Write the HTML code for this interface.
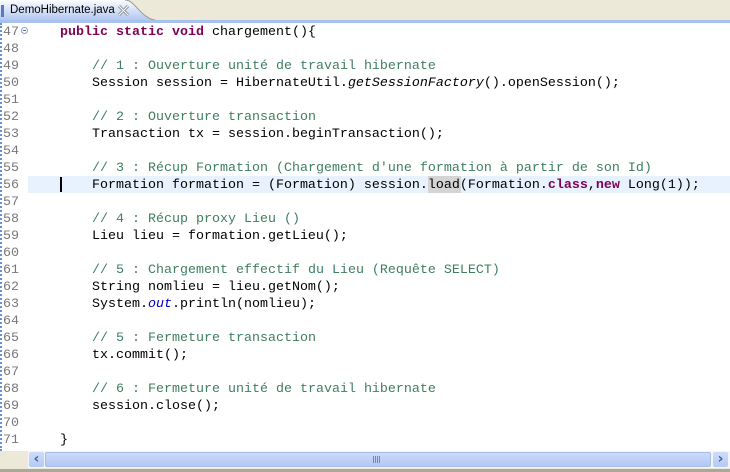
<html><head><style>
body{margin:0;width:730px;height:472px;overflow:hidden;background:#fff;position:relative;font-family:"Liberation Mono",monospace;font-size:13.33px}
.top{position:absolute;left:0;top:0;width:730px;height:23px;background:#ece9d8}
.tab{position:absolute;left:0;top:0;width:160px;height:23px}
.bar{position:absolute;left:0;top:20px;width:730px;height:3px;background:#a7c0ee}
.gut{position:absolute;left:0;top:23px;width:28px;height:428px;background:#fff;border-left:2px dotted #6b8fd3;box-sizing:border-box}
.ln{position:absolute;left:3px;color:#787878;font-size:13.33px;height:17px;line-height:17px}
.c{position:absolute;left:28px;white-space:pre;height:17px;line-height:17px;color:#000;width:702px}
.k{color:#7f0055;font-weight:bold}.cm{color:#3f7f5f}.i{font-style:italic}.f{color:#0000c0;font-style:italic}
</style></head><body>
<div class="top"></div>
<svg class="tab" width="160" height="23"><defs><linearGradient id="g" x1="0" y1="0" x2="0" y2="1"><stop offset="0" stop-color="#fbfcfe"/><stop offset="1" stop-color="#a7c0ee"/></linearGradient></defs><path d="M0 0H125C136 0 140 20 160 21V23H0Z" fill="url(#g)"/><path d="M125 0C136 0 140 20 160 21" stroke="#9c9a8d" fill="none"/></svg>
<div class="bar"></div>
<div style="position:absolute;left:1px;top:5px;width:3px;height:12px;background:#5a7bc0"></div>
<div style="position:absolute;left:10px;top:4px;font-family:'Liberation Sans',sans-serif;font-size:11.5px;color:#000">DemoHibernate.java</div>
<svg style="position:absolute;left:117px;top:4px" width="13" height="13"><path d="M2 2L11 11M11 2L2 11" stroke="#8a8f99" stroke-width="3"/><path d="M2 2L11 11M11 2L2 11" stroke="#fff" stroke-width="1"/></svg>
<div class="gut"></div>
<div style="position:absolute;left:28px;top:176px;width:702px;height:17px;background:#e8f2fe"></div>
<div style="position:absolute;left:60px;top:177px;width:2px;height:15px;background:#000"></div>
<div style="position:absolute;left:428px;top:176px;width:33px;height:17px;background:#d4d4d4"></div>
<div id="L"></div>
<script>
var code=[
'    <span class="k">public static void</span> chargement(){',
'',
'        <span class="cm">// 1 : Ouverture unité de travail hibernate</span>',
'        Session session = HibernateUtil.<span class="i">getSessionFactory</span>().openSession();',
'',
'        <span class="cm">// 2 : Ouverture transaction</span>',
'        Transaction tx = session.beginTransaction();',
'',
'        <span class="cm">// 3 : Récup Formation (Chargement d\'une formation à partir de son Id)</span>',
'        Formation formation = (Formation) session.load(Formation.<span class="k">class</span>,<span class="k">new</span> Long(1));',
'',
'        <span class="cm">// 4 : Récup proxy Lieu ()</span>',
'        Lieu lieu = formation.getLieu();',
'',
'        <span class="cm">// 5 : Chargement effectif du Lieu (Requête SELECT)</span>',
'        String nomlieu = lieu.getNom();',
'        System.<span class="f">out</span>.println(nomlieu);',
'',
'        <span class="cm">// 5 : Fermeture transaction</span>',
'        tx.commit();',
'',
'        <span class="cm">// 6 : Fermeture unité de travail hibernate</span>',
'        session.close();',
'',
'    }'];
var h='';for(var i=0;i<code.length;i++){var t=24+17*i;h+='<div class="ln" style="top:'+t+'px">'+(47+i)+'</div><div class="c" style="top:'+t+'px">'+code[i]+'</div>';}
document.getElementById('L').innerHTML=h;
</script>
<div style="position:absolute;left:21px;top:27px;width:7px;height:7px;border:1px solid #8aa0c8;border-radius:50%;box-sizing:border-box;background:#fff"></div>
<div style="position:absolute;left:23px;top:30px;width:3px;height:1px;background:#5070a8"></div>
<div style="position:absolute;left:0;top:451px;width:730px;height:21px;background:#ece9d8"></div>
<div style="position:absolute;left:28px;top:451px;width:702px;height:17px;background:#f3f5fb"></div>
<div style="position:absolute;left:29px;top:452px;width:15px;height:15px;background:linear-gradient(#cddcfb,#b5c9f5);border-radius:2px;color:#4d6185;font-size:14px;font-weight:bold;line-height:15px;text-align:center;font-family:'DejaVu Sans',sans-serif">‹</div>
<div style="position:absolute;left:45px;top:452px;width:666px;height:15px;background:linear-gradient(#cbdafb,#b3c7f5);border:1px solid #a8bde8;box-sizing:border-box;border-radius:2px"></div>
<div style="position:absolute;left:373px;top:456px;width:8px;height:7px;background:repeating-linear-gradient(90deg,#6d86c4 0 1px,transparent 1px 2px)"></div>
<div style="position:absolute;left:713px;top:452px;width:15px;height:15px;background:linear-gradient(#cddcfb,#b5c9f5);border-radius:2px;color:#4d6185;font-size:14px;font-weight:bold;line-height:15px;text-align:center;font-family:'DejaVu Sans',sans-serif">›</div>
<div style="position:absolute;left:0;top:469px;width:730px;height:3px;background:#aca899"></div>
</body></html>
